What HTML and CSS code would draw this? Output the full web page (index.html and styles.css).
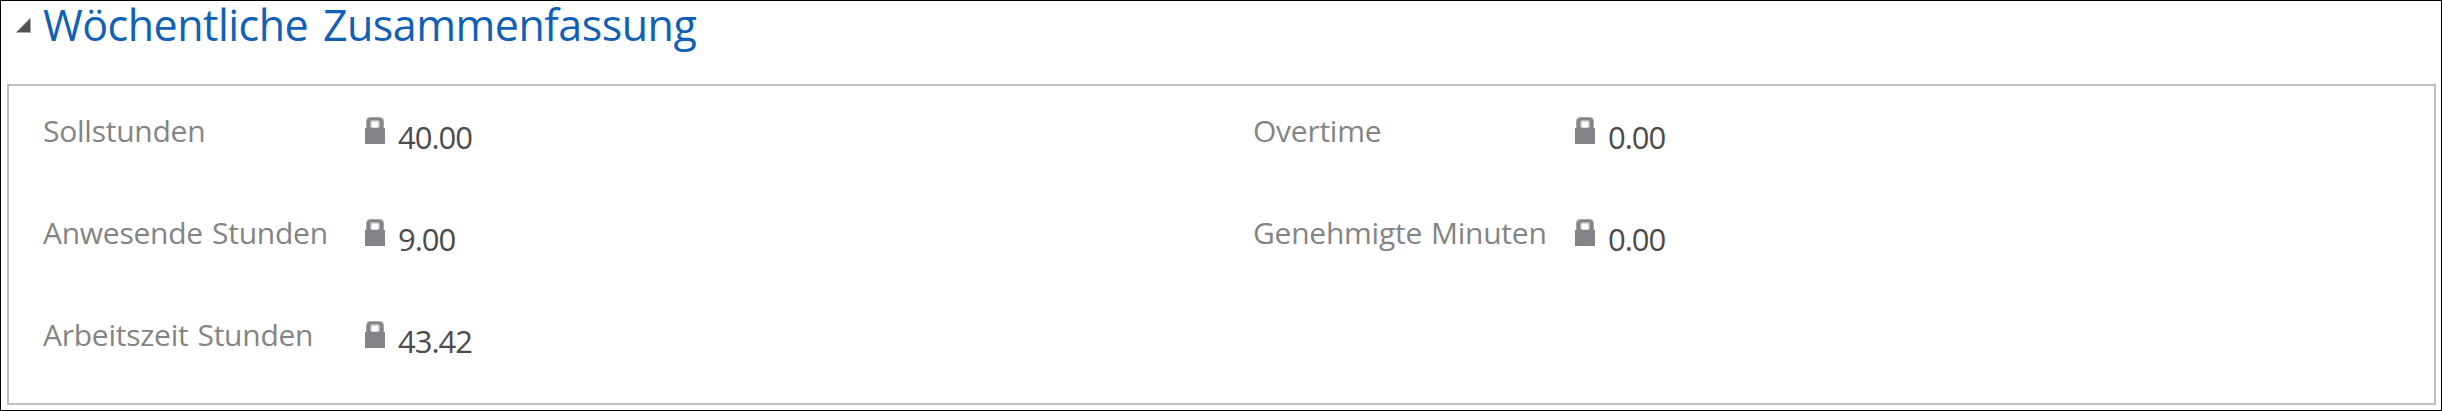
FILE: index.html
```html
<!DOCTYPE html>
<html lang="de">
<head>
    <meta charset="utf-8">
    <title>Wöchentliche Zusammenfassung</title>
    <link rel="stylesheet" href="styles.css">
</head>
<body>
    <svg class="symbols" aria-hidden="true">
        <symbol id="lock" viewBox="0 0 20 27">
            <path fill="#a5a6a9" d="M1 12V5Q1 0 6 0H14Q19 0 19 5V12Z"/>
            <path fill="#838488" d="M0 11H2V5Q2 1 6 1H14Q18 1 18 5V11H20V27H0Z"/>
            <rect x="5" y="3" width="10" height="8" rx="2" fill="#b5b6b8"/>
            <rect x="6.5" y="4.5" width="7" height="6" rx="1" fill="#fff"/>
        </symbol>
    </svg>
    <section class="summary">
        <header class="summary-header">
            <svg class="arrow" viewBox="0 0 16 16"><path fill="#505050" stroke="#aaa" stroke-width="1" d="M15.5 1V15.5H1Z"/></svg>
            <h2>Wöchentliche Zusammenfassung</h2>
        </header>

        <div class="fields">
            <div class="column">
                <div class="field"><span class="label">Sollstunden</span><svg class="lock"><use href="#lock"/></svg><span class="value">40.00</span></div>
                <div class="field"><span class="label">Anwesende Stunden</span><svg class="lock"><use href="#lock"/></svg><span class="value">9.00</span></div>
                <div class="field"><span class="label">Arbeitszeit Stunden</span><svg class="lock"><use href="#lock"/></svg><span class="value">43.42</span></div>
            </div>
            <div class="column">
                <div class="field"><span class="label">Overtime</span><svg class="lock"><use href="#lock"/></svg><span class="value">0.00</span></div>
                <div class="field"><span class="label">Genehmigte Minuten</span><svg class="lock"><use href="#lock"/></svg><span class="value">0.00</span></div>
            </div>
        </div>
    </section>
</body>
</html>
```

FILE: styles.css
```css
* {
    box-sizing: border-box;
}

body {
    margin: 0;
    font-family: "Open Sans", "Noto Sans", sans-serif;
}

.symbols {
    display: none;
}

.summary {
    height: 411px;
    padding: 0 5px 5px 6px;
    border: 1px solid #000;
    background: #fff;
}

.summary-header {
    display: flex;
    height: 83px;
    padding-left: 8px;
}

.summary-header h2 {
    margin: 0 0 0 12px;
    color: #1160b7;
    font-size: 43px;
    font-weight: 400;
    line-height: 47px;
    letter-spacing: -0.5px;
    word-spacing: 4px;
}

.arrow {
    width: 16px;
    height: 16px;
    margin-top: 16px;
}

.fields {
    display: grid;
    grid-template-columns: 1210px 1fr;
    height: 321px;
    padding: 31px 0 0 34px;
    border: 2px solid #bbc0c4;
}

.field {
    display: flex;
    height: 102px;
}

.label {
    width: 322px;
    color: #848484;
    font-size: 30px;
    line-height: 27px;
    letter-spacing: -0.25px;
    word-spacing: 1.5px;
    white-space: nowrap;
}

.lock {
    width: 20px;
    height: 27px;
}

.value {
    margin-left: 13px;
    padding-top: 3px;
    color: #4c4c4c;
    font-size: 31px;
    line-height: 34px;
    letter-spacing: -1px;
}
```
